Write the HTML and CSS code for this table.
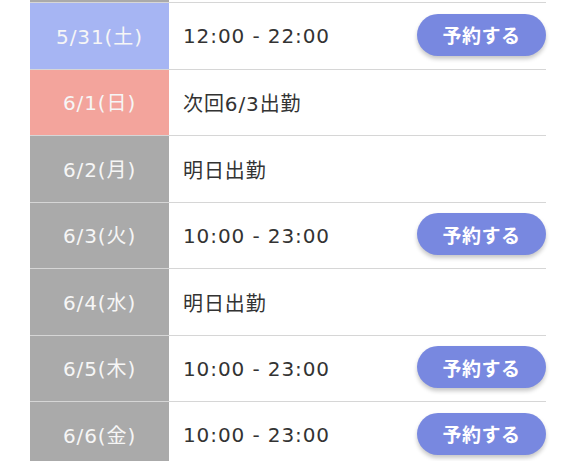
FILE: index.html
```html
<!DOCTYPE html>
<html lang="ja">
<head>
<meta charset="utf-8">
<link rel="stylesheet" href="styles.css">
</head>
<body>
<div class="schedule">
  <div class="row prev" aria-hidden="true">
    <div class="date gray"></div>
    <div class="info"></div>
  </div>
  <div class="row">
    <div class="date sat">5/31(土)</div>
    <div class="info"><span class="time">12:00 - 22:00</span><button class="btn">予約する</button></div>
  </div>
  <div class="row">
    <div class="date sun">6/1(日)</div>
    <div class="info"><span class="time">次回6/3出勤</span></div>
  </div>
  <div class="row">
    <div class="date gray">6/2(月)</div>
    <div class="info"><span class="time">明日出勤</span></div>
  </div>
  <div class="row">
    <div class="date gray">6/3(火)</div>
    <div class="info"><span class="time">10:00 - 23:00</span><button class="btn">予約する</button></div>
  </div>
  <div class="row">
    <div class="date gray">6/4(水)</div>
    <div class="info"><span class="time">明日出勤</span></div>
  </div>
  <div class="row">
    <div class="date gray">6/5(木)</div>
    <div class="info"><span class="time">10:00 - 23:00</span><button class="btn">予約する</button></div>
  </div>
  <div class="row">
    <div class="date gray">6/6(金)</div>
    <div class="info"><span class="time">10:00 - 23:00</span><button class="btn">予約する</button></div>
  </div>
</div>
</body>
</html>
```

FILE: styles.css
```css
html, body {
  margin: 0;
  padding: 0;
  background: #ffffff;
  overflow: hidden;
}
body {
  font-family: "DejaVu Sans", "Noto Sans CJK JP", sans-serif;
}
.schedule {
  margin: -63.5px 30px 0 30px;
  display: flex;
  flex-direction: column;
}
.row {
  display: grid;
  grid-template-columns: 139px 1fr;
  height: 66.5px;
  box-sizing: border-box;
  border-bottom: 1px solid #d6d6d6;
}
.date {
  display: flex;
  align-items: center;
  justify-content: center;
  color: #f6f6f6;
  font-family: "DejaVu Sans", "Noto Sans CJK JP", sans-serif;
  font-size: 20px;
  font-weight: 400;
  letter-spacing: 0.9px;
  padding-bottom: 1px;
}
.gray { background: #aaaaaa; }
.sat { background: #a6b5f3; }
.sun { background: #f3a49c; }
.info {
  display: flex;
  align-items: center;
  justify-content: space-between;
  padding-left: 14px;
}
.time {
  color: #333333;
  font-family: "DejaVu Sans", "Noto Sans CJK JP", sans-serif;
  font-size: 20px;
  font-weight: 400;
  letter-spacing: 0.9px;
  padding-top: 1px;
}
.btn {
  width: 129px;
  height: 42px;
  border: none;
  border-radius: 21px;
  background: #7888e0;
  color: #ffffff;
  font-family: "Noto Sans CJK JP", sans-serif;
  font-size: 19px;
  font-weight: 700;
  letter-spacing: 0.5px;
  box-shadow: 0 3px 4px rgba(0, 0, 0, 0.22);
  padding: 0;
  margin-top: -2px;
}
```
